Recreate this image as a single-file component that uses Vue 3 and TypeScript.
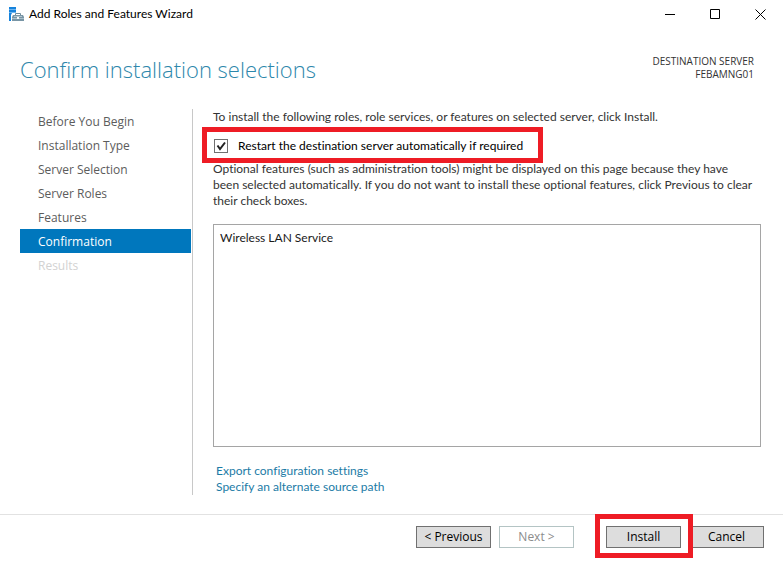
<script setup lang="ts">
import { ref } from 'vue'

interface Step {
  label: string
  state: 'done' | 'current' | 'disabled'
}

const steps: Step[] = [
  { label: 'Before You Begin', state: 'done' },
  { label: 'Installation Type', state: 'done' },
  { label: 'Server Selection', state: 'done' },
  { label: 'Server Roles', state: 'done' },
  { label: 'Features', state: 'done' },
  { label: 'Confirmation', state: 'current' },
  { label: 'Results', state: 'disabled' },
]

const selections: string[] = ['Wireless LAN Service']
const restart = ref<boolean>(true)
</script>

<template>
  <div class="wizard">
    <header class="titlebar">
      <svg class="app-icon" viewBox="0 0 15 15" aria-hidden="true">
        <path d="M0 0h7v14H0z" fill="#1683dc" />
        <path d="M0 2h7v1H0zM0 5h7v1H0z" fill="#6db5f0" />
        <path d="M3 6h12v9H2V8z" fill="#fff" />
        <path d="M6.500 8V6.500h5V8" fill="none" stroke="#6f8c9c" />
        <path d="M4 8h10l1 2v4H3v-4z" fill="#7895a5" />
        <path d="M5 9h8v1H5z" fill="#b4c6d0" />
        <path d="M3 11h12v1H3z" fill="#a9bfca" />
        <path d="M8 10h2v2H8z" fill="#f4f8fa" />
      </svg>
      <span class="window-title">Add Roles and Features Wizard</span>
      <div class="window-controls">
        <button type="button" aria-label="Minimize">
          <svg viewBox="0 0 11 11"><path d="M0 5.5h10" /></svg>
        </button>
        <button type="button" aria-label="Maximize">
          <svg viewBox="0 0 11 11"><path d="M.5.5h9v9h-9z" /></svg>
        </button>
        <button type="button" aria-label="Close">
          <svg viewBox="0 0 11 11"><path d="M.5.5l10 10M10.500 .5l-10 10" /></svg>
        </button>
      </div>
    </header>

    <section class="heading">
      <h1>Confirm installation selections</h1>
      <p class="destination">DESTINATION SERVER<br />FEBAMNG01</p>
    </section>

    <div class="body">
      <nav class="steps">
        <ul>
          <li v-for="step in steps" :key="step.label" :class="step.state">{{ step.label }}</li>
        </ul>
      </nav>

      <main class="content">
        <p>To install the following roles, role services, or features on selected server, click Install.</p>
        <div class="restart">
          <label class="check">
            <input v-model="restart" type="checkbox" />
            <svg v-if="restart" class="tick" viewBox="0 0 14 14" aria-hidden="true">
              <path d="M3.500 6.500l2.500 3.500L11 3.500" />
            </svg>
            <span>Restart the destination server automatically if required</span>
          </label>
        </div>
        <p>
          Optional features (such as administration tools) might be displayed on this page because they have<br />
          been selected automatically. If you do not want to install these optional features, click Previous to clear<br />
          their check boxes.
        </p>
        <ul class="selections">
          <li v-for="item in selections" :key="item">{{ item }}</li>
        </ul>
        <div class="links">
          <a href="#export">Export configuration settings</a>
          <a href="#source">Specify an alternate source path</a>
        </div>
      </main>
    </div>

    <footer class="actions">
      <button type="button">&lt; Previous</button>
      <button type="button" disabled>Next &gt;</button>
      <span class="install"><button type="button">Install</button></span>
      <button type="button">Cancel</button>
    </footer>
  </div>
</template>

<style>
body {
  margin: 0;
  background: #fff;
}
</style>

<style scoped>
.wizard {
  box-sizing: border-box;
  display: flex;
  flex-direction: column;
  min-height: 100vh;
  background: #fff;
  color: #333;
  font-family: 'Open Sans', 'Noto Sans', sans-serif;
  font-size: 12px;
  font-variant-ligatures: none;
  line-height: 16px;
}

p,
h1,
ul {
  margin: 0;
  padding: 0;
}

ul {
  list-style: none;
}

.titlebar {
  display: flex;
  align-items: center;
  height: 28px;
  padding-left: 9px;
  color: #000;
  font-family: Lato, 'Open Sans', sans-serif;
}

.app-icon {
  width: 15px;
  height: 15px;
  margin-right: 5px;
}

.window-controls {
  display: flex;
  margin-left: auto;
}

.window-controls button {
  display: flex;
  align-items: center;
  justify-content: center;
  width: 45px;
  height: 28px;
  padding: 0;
  border: 0;
  background: none;
}

.window-controls svg {
  width: 11px;
  height: 11px;
  fill: none;
  stroke: #000;
}

.heading {
  display: flex;
  justify-content: space-between;
  align-items: flex-start;
  height: 57px;
  padding: 24px 29px 0 20px;
}

h1 {
  color: #2d87ab;
  font-size: 22px;
  font-weight: 300;
  line-height: 34px;
}

.destination {
  font-size: 10px;
  line-height: 13px;
  padding-top: 3px;
  text-align: right;
}

.body {
  display: flex;
  flex: 1;
  padding: 0 22px 19px 20px;
}

.steps {
  flex: none;
  width: 171px;
  padding: 0 1px 0 0;
  border-right: 1px solid #c8c8c8;
}

.steps li {
  height: 24px;
  padding-left: 18px;
  line-height: 26px;
  color: #5c5c5c;
}

.steps .current {
  background: #0077bd;
  color: #fff;
}

.steps .disabled {
  color: #d2d2d2;
}

.content {
  display: flex;
  flex: 1;
  flex-direction: column;
  min-width: 0;
  padding-left: 20px;
  font-family: Lato, 'Open Sans', sans-serif;
}

.restart {
  position: relative;
  display: flex;
  align-items: center;
  height: 36px;
  color: #000;
}

.restart::before {
  content: '';
  position: absolute;
  inset: 2px auto -2px -11px;
  width: 331px;
  border: 5px solid #ee1c25;
  pointer-events: none;
}

.check {
  position: relative;
  display: flex;
  align-items: center;
  gap: 10px;
  padding: 6px 0 0 1px;
}

.check input {
  appearance: none;
  box-sizing: border-box;
  width: 14px;
  height: 14px;
  margin: 0;
  border: 1px solid #707070;
  background: #fff;
}

.tick {
  position: absolute;
  left: 1px;
  width: 14px;
  height: 14px;
  fill: none;
  stroke: #222;
  stroke-width: 2;
  pointer-events: none;
}

.selections {
  flex: 1;
  margin-top: 15px;
  padding: 5px 6px;
  border: 1px solid #a5a5a5;
  color: #1a1a1a;
}

.links {
  display: flex;
  flex-direction: column;
  align-items: flex-start;
  padding: 16px 0 0 3px;
}

.links a {
  color: #1b7ba6;
  text-decoration: none;
}

.actions {
  display: flex;
  gap: 8px;
  padding: 11px 19px 13px;
  border-top: 1px solid #e2e2e2;
  justify-content: flex-end;
}

.actions button {
  box-sizing: border-box;
  width: 75px;
  height: 22px;
  padding: 0;
  border: 1px solid #707070;
  background: #ddd;
  color: #000;
  font: inherit;
}

.actions button:disabled {
  border-color: #b4c4c4;
  background: #fff;
  color: #8c8c8c;
}

.install {
  position: relative;
  margin-left: 24px;
}

.install::after {
  content: '';
  position: absolute;
  inset: -12px -12px -10px -11px;
  border: 5px solid #ee1c25;
  pointer-events: none;
}
</style>
